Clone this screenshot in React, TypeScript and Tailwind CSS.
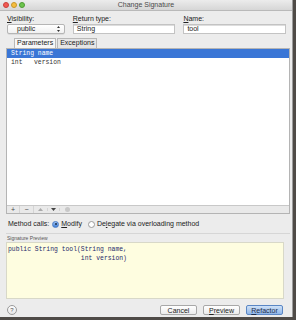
import React from 'react';

const sans = { fontFamily: '"Liberation Sans", Arial, sans-serif' };
const mono = { fontFamily: '"Liberation Mono", "Courier New", monospace' };

const Field: React.FC<{ label: string; value: string; width: string; select?: boolean }> = ({ label, value, width, select }) => (
  <div className={`flex flex-col ${width}`}>
    <span className="h-[9px] text-[7px] leading-[9px] text-[#222]">
      <span className="underline">{label[0]}</span>
      {label.slice(1)}
    </span>
    {select ? (
      <div className="mt-[1px] flex h-[10px] items-center justify-between rounded-[2px] border border-[#b5b5b5] bg-gradient-to-b from-white to-[#f1f1f1] pl-[9px] pr-[4px] text-[7px] text-[#222] shadow-[0_0.5px_0_#ccc]">
        <span>{value}</span>
        <svg width="3" height="6" viewBox="0 0 3 6" className="fill-[#333]">
          <path d="M1.5 0 L3 2 L0 2 Z" />
          <path d="M0 4 L3 4 L1.5 6 Z" />
        </svg>
      </div>
    ) : (
      <div className="mt-[1px] flex h-[10px] items-center border border-[#c3c3c3] bg-white pl-[3px] text-[7px] text-[#222] shadow-[inset_0_1px_0_#ddd]">
        {value}
      </div>
    )}
  </div>
);

const Btn: React.FC<{ label: string; u?: number; primary?: boolean }> = ({ label, u, primary }) => (
  <div
    className={`flex h-[10px] w-[37px] items-center justify-center rounded-[2px] border text-[7px] leading-none ${
      primary
        ? 'border-[#5a86c4] bg-gradient-to-b from-[#cfe1f7] to-[#8fb6e9] text-[#1d2c4a]'
        : 'border-[#a8a8a8] bg-gradient-to-b from-white to-[#ececec] text-[#222]'
    }`}
  >
    {u === undefined ? (
      label
    ) : (
      <>
        {label.slice(0, u)}
        <span className="underline">{label[u]}</span>
        {label.slice(u + 1)}
      </>
    )}
  </div>
);

export default function App() {
  return (
    <div className="h-[320px] w-[296px] overflow-hidden bg-[#4f4b47]" style={sans}>
      <div className="flex h-[317px] w-[293px] flex-col border-r border-[#9c9c9c] bg-[#ececec]">
        {/* title bar */}
        <div className="relative flex h-[11px] items-center justify-center border-b border-[#b9b9b9] bg-gradient-to-b from-[#ececec] to-[#d6d6d6]">
          <div className="absolute left-[3px] top-[2px] flex gap-[2px]">
            <span className="h-[6px] w-[6px] rounded-full border border-[#c9403a] bg-[#f25a52]" />
            <span className="h-[6px] w-[6px] rounded-full border border-[#c6962d] bg-[#f6be3f]" />
            <span className="h-[6px] w-[6px] rounded-full border border-[#4e9a34] bg-[#6cc54d]" />
          </div>
          <span className="text-[7px] text-[#4a4a4a]">Change Signature</span>
        </div>

        <div className="flex flex-1 flex-col px-[6px]">
          {/* fields */}
          <div className="mt-[3px] flex gap-[8px] pl-[1px]">
            <Field label="Visibility:" value="public" width="w-[58px]" select />
            <Field label="Return type:" value="String" width="w-[103px]" />
            <Field label="Name:" value="tool" width="w-[103px]" />
          </div>

          {/* tabs */}
          <div className="mt-[4px] flex pl-[8px]">
            <div className="flex h-[10px] items-center border border-b-0 border-[#b8b8b8] bg-[#f7f7f7] px-[2px] text-[7px] text-[#222]">
              Parameters
            </div>
            <div className="ml-[1px] flex h-[10px] items-center border border-b-0 border-[#b8b8b8] bg-[#e6e6e6] px-[2px] text-[7px] text-[#222]">
              Exceptions
            </div>
          </div>

          {/* table */}
          <div className="flex h-[166px] w-[284px] flex-col border border-[#b4b4b4] bg-white">
            <div className="flex h-[9px] items-center bg-[#3a76d6] pl-[4px] text-[6.4px] text-white" style={mono}>
              String name
            </div>
            <div className="flex h-[9px] items-center pl-[4px] text-[6.4px] text-[#333]" style={mono}>
              int&nbsp;&nbsp;&nbsp;version
            </div>
            <div className="flex-1" />
            <div className="flex h-[8px] items-center border-t border-[#c8c8c8] bg-[#e9e9e9] text-[7px] leading-none text-[#444]">
              <span className="flex w-[13px] justify-center border-r border-[#d4d4d4]">+</span>
              <span className="flex w-[14px] justify-center border-r border-[#d4d4d4]">−</span>
              <span className="flex w-[14px] justify-center border-r border-[#d4d4d4]">
                <svg width="5" height="3" viewBox="0 0 5 3" className="fill-[#aaa]">
                  <path d="M2.5 0 L5 3 L0 3 Z" />
                </svg>
              </span>
              <span className="flex w-[12px] justify-center border-r border-[#d4d4d4]">
                <svg width="5" height="3" viewBox="0 0 5 3" className="fill-[#444]">
                  <path d="M0 0 L5 0 L2.5 3 Z" />
                </svg>
              </span>
              <span className="flex w-[14px] justify-center">
                <span className="h-[5px] w-[5px] rounded-full bg-[#c8c8c8]" />
              </span>
            </div>
          </div>

          {/* method calls */}
          <div className="mt-[5px] flex h-[10px] items-center pl-[2px] text-[7px] text-[#222]">
            <span>Method calls:</span>
            <span className="ml-[3px] flex h-[7px] w-[7px] items-center justify-center rounded-full border border-[#4a7dc7] bg-gradient-to-b from-[#9ec2f2] to-[#3f7fd6]">
              <span className="h-[2px] w-[2px] rounded-full bg-[#1a2d4a]" />
            </span>
            <span className="ml-[2px]">
              <span className="underline">M</span>odify
            </span>
            <span className="ml-[6px] h-[7px] w-[7px] rounded-full border border-[#9a9a9a] bg-white" />
            <span className="ml-[2px]">
              De<span className="underline">l</span>egate via overloading method
            </span>
          </div>

          {/* separator + label */}
          <div className="mt-[4px] h-[1px] w-[284px] bg-[#d6d6d6]" />
          <div className="mt-[1px] h-[7px] pl-[1px] text-[5px] leading-[7px] text-[#555]">Signature Preview</div>

          {/* preview */}
          <div
            className="h-[57px] w-[278px] border border-[#d8d8c8] bg-[#fefde0] pl-[1px] pt-[2px] text-[6.4px] leading-[9px] text-[#1e2a6a]"
            style={mono}
          >
            <div>public String tool(String name,</div>
            <div className="whitespace-pre">{'                   int version)'}</div>
          </div>

          {/* bottom bar */}
          <div className="mt-[6px] flex items-center">
            <span className="ml-[1px] flex h-[10px] w-[10px] items-center justify-center rounded-full border border-[#9a9a9a] bg-gradient-to-b from-white to-[#e6e6e6] text-[6px] text-[#555]">
              ?
            </span>
            <div className="ml-auto mr-[3px] flex gap-[6px]">
              <Btn label="Cancel" />
              <Btn label="Preview" u={0} />
              <Btn label="Refactor" u={0} primary />
            </div>
          </div>
        </div>
      </div>
    </div>
  );
}
